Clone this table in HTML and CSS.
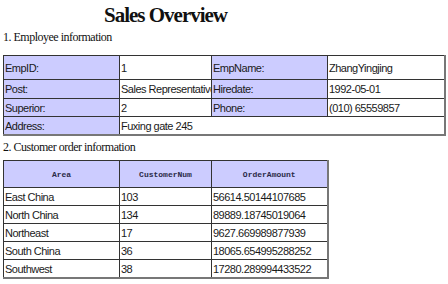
FILE: index.html
```html
<!DOCTYPE html>
<html>
<head>
	<meta charset="utf-8">
	<title>Sales Overview</title>
	<link rel="stylesheet" href="styles.css">
</head>
<body>
	<div class="report">
		<h1 class="title">Sales Overview</h1>

		<p class="section">1. Employee information</p>
		<table class="grid emp">
			<colgroup>
				<col class="c-label"><col class="c-mid"><col class="c-label"><col class="c-last">
			</colgroup>
			<tr class="first">
				<td class="label">EmpID:</td>
				<td>1</td>
				<td class="label">EmpName:</td>
				<td>ZhangYingjing</td>
			</tr>
			<tr class="r19">
				<td class="label">Post:</td>
				<td>Sales Representative</td>
				<td class="label">Hiredate:</td>
				<td>1992-05-01</td>
			</tr>
			<tr>
				<td class="label">Superior:</td>
				<td>2</td>
				<td class="label">Phone:</td>
				<td>(010) 65559857</td>
			</tr>
			<tr>
				<td class="label">Address:</td>
				<td colspan="3">Fuxing gate 245</td>
			</tr>
		</table>

		<p class="section second">2. Customer order information</p>
		<table class="grid orders">
			<colgroup>
				<col class="c-label"><col class="c-mid"><col class="c-label">
			</colgroup>
			<tr class="head">
				<th>Area</th>
				<th>CustomerNum</th>
				<th>OrderAmount</th>
			</tr>
			<tr><td>East China</td><td>103</td><td>56614.50144107685</td></tr>
			<tr><td>North China</td><td>134</td><td>89889.18745019064</td></tr>
			<tr><td>Northeast</td><td>17</td><td>9627.669989877939</td></tr>
			<tr><td>South China</td><td>36</td><td>18065.654995288252</td></tr>
			<tr><td>Southwest</td><td>38</td><td>17280.289994433522</td></tr>
		</table>
	</div>
</body>
</html>
```

FILE: styles.css
```css
html {
	background: #fff;
}
body {
	margin: 0;
	padding: 0 3px;
	font-family: "Liberation Serif", "Times New Roman", serif;
	color: #111;
}
.title {
	width: 325px;
	margin: 0;
	padding-top: 2px;
	font-size: 21px;
	line-height: 26px;
	letter-spacing: -1px;
	text-align: center;
	font-weight: bold;
}
.section {
	margin: 2px 0 11px 0;
	font-size: 12px;
	line-height: 14px;
	letter-spacing: -0.5px;
}
.section.second {
	margin: 4px 0 6px 0;
}
.grid {
	border-collapse: collapse;
	table-layout: fixed;
	border: 1px solid #555;
	border-right: 2px solid #777;
	border-bottom: 2px solid #777;
}
.grid td, .grid th {
	border: 1px solid #333;
	padding: 0 1px;
	height: 17px;
	font-family: "Liberation Sans", Arial, sans-serif;
	font-size: 11px;
	letter-spacing: -0.5px;
	text-align: left;
	white-space: nowrap;
	overflow: hidden;
	color: #1a1a1a;
}
.emp {
	width: 442px;
}
.orders {
	width: 325px;
}
col.c-label {
	width: 116px;
}
col.c-mid {
	width: 92px;
}
col.c-last {
	width: 117px;
}
.grid td.label {
	background-color: #ccccff;
}
.emp tr.first td {
	height: 23px;
}
.emp tr.r19 td {
	height: 18px;
}
.orders tr.head th {
	height: 26px;
	background-color: #ccccff;
	font-family: "Liberation Mono", "Courier New", monospace;
	font-size: 8px;
	font-weight: bold;
	letter-spacing: 0;
	text-align: center;
	color: #2a2a48;
}
```
